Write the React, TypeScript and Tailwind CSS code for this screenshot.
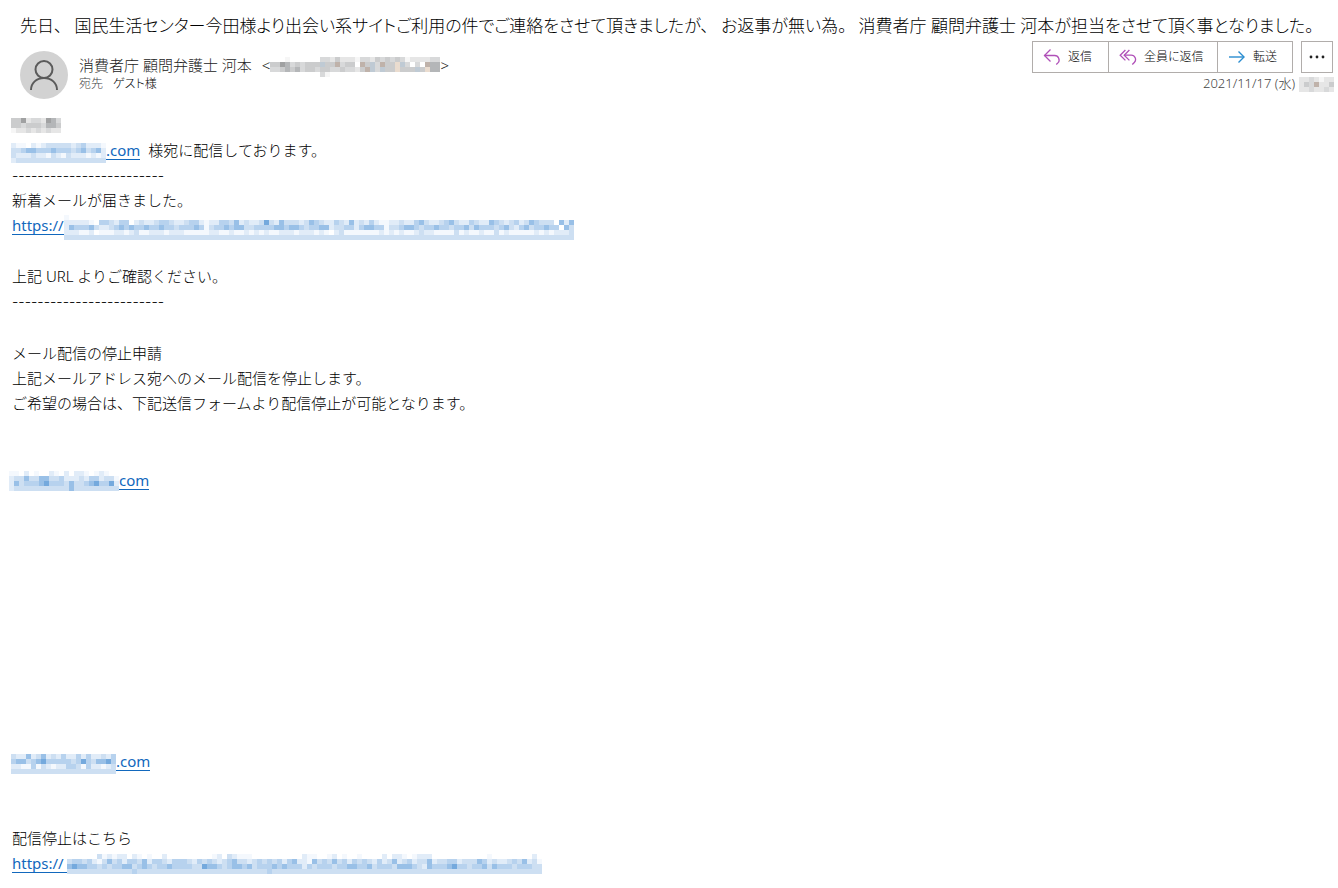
import type { ReactNode } from "react";
import clsx from "clsx";

type Palette = Record<string, string>;

const BLUE: Palette = {
  "0": "#f4f8fd",
  "1": "#e1ecf8",
  "2": "#cddff2",
  "3": "#b7d2ee",
  "4": "#99c0e7",
  "5": "#74a9dd",
};

const GRAY: Palette = {
  "0": "#f6f6f6",
  "1": "#e6e6e6",
  "2": "#d8d9da",
  "3": "#cbcccd",
  "4": "#b4b6b8",
  "5": "#a0a1a2",
  b: "#bfcad4",
  o: "#eadccf",
  n: "#bfb2aa",
};

const CELL = 5;

// One character per cell, "." leaves the cell empty.
const RECIPIENT_NAME = ["3351221542", "3323332443", "0112121211"];

const RECIPIENT_MAIL = [
  "100.101222221231110",
  "2234433343332342341",
  "2111211021021110101",
  "1222222222222222222",
];

const NEW_MAIL_URL = [
  "0" + ".".repeat(101),
  "111110.332133.121123321123310113324121125214222124321132141213100112113421123421132114321231243222.41433232",
  "143334211234343343343323334302334344223333443443233441223313443302234432334332334243332342134233433.42333433",
  "111001.0001101200111011100000110010010101001110111010.120000000101010012110000201001002010000010101112.11010",
  "2".repeat(102),
].map((row) => row.slice(0, 102));

const STOP_MAIL = [
  "00.1.0..10.1.110.010..",
  "1224224422311121331220",
  "1423334533324223453351",
  "1222222222224222222222",
];

const INFO_MAIL = [
  "211412412131131311213",
  "344234533333235324453",
  "110030210113320311012",
  "222222222222222222222",
];

const STOP_URL = [
  "......201011.10.0..1.........01.21000..........100..01.0..0....1.110.0111...........0........1",
  "23323102423133241332133321323212342212323231341104232423132321312412312241223312224312112324120123",
  "45443323233442343233433332254432344342333434333132333233443342333244432143334533233424333233322442353",
  "22222222222223222222222222222222222222223222222222222222222222222222222222222222222222222222222222",
].map((row) => row.padEnd(95, ".").slice(0, 95));

const SENDER_MAIL = [
  "...0......221311102213232320111122",
  "3354232333b33n233.n3b2n33ob2.2.n44",
  "2234342332332232213nb2b33o333b3o44",
  "..........20......................",
];

const TIME = ["1121011", "132n113", "1121121"];

function Mosaic({
  rows,
  palette = BLUE,
  className,
}: {
  rows: string[];
  palette?: Palette;
  className?: string;
}) {
  const width = rows[0].length * CELL;
  const height = rows.length * CELL;
  return (
    <svg
      width={width}
      height={height}
      viewBox={`0 0 ${width} ${height}`}
      shapeRendering="crispEdges"
      aria-hidden="true"
      className={clsx("shrink-0", className)}
    >
      {rows.flatMap((row, y) =>
        [...row].map((c, x) =>
          palette[c] ? (
            <rect
              key={`${x}-${y}`}
              x={x * CELL}
              y={y * CELL}
              width={CELL}
              height={CELL}
              fill={palette[c]}
            />
          ) : null,
        ),
      )}
    </svg>
  );
}

function ReplyIcon() {
  return (
    <svg width="18" height="18" viewBox="0 0 18 18" fill="none" stroke="#b050b8" strokeWidth="1.3" aria-hidden="true">
      <path d="M7.5 1.5 1.5 7.5l6 6" />
      <path d="M1.5 7.5h10.2a4.4 4.4 0 0 1 3.2 7.4l-1.6 1.6" />
    </svg>
  );
}

function ReplyAllIcon() {
  return (
    <svg width="18" height="18" viewBox="0 0 18 18" fill="none" stroke="#b050b8" strokeWidth="1.3" aria-hidden="true">
      <path d="M6.4 2 1.2 7.2l5.2 5.2" />
      <path d="M10.4 2 5.2 7.2l5.2 5.2" />
      <path d="M5.2 7.2h7a4.3 4.3 0 0 1 3.1 7.3l-2 2" />
    </svg>
  );
}

function ForwardIcon() {
  return (
    <svg width="18" height="18" viewBox="0 0 18 18" fill="none" stroke="#2a8dd0" strokeWidth="1.4" aria-hidden="true">
      <path d="M1 9h15" />
      <path d="m10.5 3.5 5.5 5.5-5.5 5.5" />
    </svg>
  );
}

function Avatar() {
  return (
    <span className="flex size-12 shrink-0 items-center justify-center rounded-full bg-[#d2d2d2]">
      <svg width="30" height="32" viewBox="0 0 30 32" fill="none" stroke="#5b5b5b" strokeWidth="2" aria-hidden="true">
        <circle cx="15" cy="10.5" r="8.5" />
        <path d="M2 31c0-7 5.5-12 13-12s13 5 13 12" />
      </svg>
    </span>
  );
}

function Line({ children }: { children: ReactNode }) {
  return <div className="flex h-[25px] items-center whitespace-pre">{children}</div>;
}

function MailLink({ children, className }: { children: ReactNode; className?: string }) {
  return (
    <a
      href="#"
      className={clsx(
        "flex h-[19px] items-center border-b border-[#1268bd] font-normal text-[#1268bd]",
        className,
      )}
    >
      {children}
    </a>
  );
}

const SUBJECT = [
  "先日、",
  "国民生活センター今田様より出会い系サイトご利用の件でご連絡をさせて頂きましたが、",
  "お返事が無い為。",
  "消費者庁 顧問弁護士 河本が担当をさせて頂く事となりました。",
];

const ACTIONS = [
  { label: "返信", icon: <ReplyIcon />, className: "w-[77px]" },
  { label: "全員に返信", icon: <ReplyAllIcon />, className: "w-[110px]" },
  { label: "転送", icon: <ForwardIcon />, className: "w-[76px]" },
];

export default function App() {
  return (
    <main className="bg-white pb-3 font-['Noto_Sans','Noto_Sans_CJK_JP',sans-serif] text-[15px] font-light text-black">
      <header className="pt-2.5 pl-5">
        <h1 className="flex gap-3 text-[17px] leading-[31px] font-light whitespace-nowrap [font-feature-settings:'palt']">
          {SUBJECT.map((clause) => (
            <span key={clause}>{clause}</span>
          ))}
        </h1>
        <div className="flex justify-between">
          <div className="flex gap-[11px] pt-[10px]">
            <Avatar />
            <div className="pt-1">
              <div className="flex h-5 items-center text-[#222]">
                <span className="mr-2.5">消費者庁 顧問弁護士 河本</span>
                <span>&lt;</span>
                <Mosaic rows={SENDER_MAIL} palette={GRAY} className="-mb-1" />
                <span>&gt;</span>
              </div>
              <div className="flex gap-[10px] text-xs leading-[18px] [font-feature-settings:'palt']">
                <span className="text-[#444]">宛先</span>
                <span className="text-black">ゲスト様</span>
              </div>
            </div>
          </div>
          <div className="flex flex-col items-end pr-1">
            <div className="mr-px flex gap-2 text-xs text-black [font-feature-settings:'palt']">
              <div className="flex">
                {ACTIONS.map((action) => (
                  <button
                    key={action.label}
                    type="button"
                    className={clsx(
                      "-mr-px flex h-8 items-center gap-[7px] border border-[#b1adab] pl-[10px] whitespace-nowrap last:mr-0",
                      action.className,
                    )}
                  >
                    {action.icon}
                    {action.label}
                  </button>
                ))}
              </div>
              <button
                type="button"
                aria-label="その他の操作"
                className="flex size-8 items-center justify-center border border-[#b1adab]"
              >
                <svg width="16" height="4" viewBox="0 0 16 4" fill="#222" aria-hidden="true">
                  <circle cx="2" cy="2" r="1.4" />
                  <circle cx="8" cy="2" r="1.4" />
                  <circle cx="14" cy="2" r="1.4" />
                </svg>
              </button>
            </div>
            <div className="flex h-[22px] items-center gap-1 text-[13px] text-[#444]">
              <time dateTime="2021-11-17">2021/11/17 (水)</time>
              <Mosaic rows={TIME} palette={GRAY} />
            </div>
          </div>
        </div>
      </header>

      <article className="pt-[14px] pl-3">
        <section>
          <Line>
            <Mosaic rows={RECIPIENT_NAME} palette={GRAY} className="-ml-px" />
          </Line>
          <Line>
            <Mosaic rows={RECIPIENT_MAIL} className="-ml-px self-end" />
            <MailLink>.com</MailLink>
            <span className="ml-2">様宛に配信しております。</span>
          </Line>
          <Line>
            <span className="font-['Inter'] text-sm">------------------------</span>
          </Line>
          <Line>新着メールが届きました。</Line>
          <Line>
            <MailLink>https://</MailLink>
            <Mosaic rows={NEW_MAIL_URL} className="-mb-0.5 self-end" />
          </Line>
        </section>

        <section className="mt-[26px]">
          <Line>上記 URL よりご確認ください。</Line>
          <Line>
            <span className="font-['Inter'] text-sm">------------------------</span>
          </Line>
        </section>

        <section className="mt-[27px]">
          <Line>メール配信の停止申請</Line>
          <Line>上記メールアドレス宛へのメール配信を停止します。</Line>
          <Line>ご希望の場合は、下記送信フォームより配信停止が可能となります。</Line>
        </section>

        <section className="mt-[52px]">
          <Line>
            <Mosaic rows={STOP_MAIL} className="-ml-[3px] mb-0.5 self-end" />
            <MailLink>com</MailLink>
          </Line>
        </section>

        <section className="mt-64">
          <Line>
            <Mosaic rows={INFO_MAIL} className="-ml-px self-end" />
            <MailLink>.com</MailLink>
          </Line>
        </section>

        <section className="mt-[52px]">
          <Line>配信停止はこちら</Line>
          <Line>
            <MailLink className="pr-[3px]">https://</MailLink>
            <Mosaic rows={STOP_URL} className="mb-0.5 self-end" />
          </Line>
        </section>
      </article>
    </main>
  );
}
